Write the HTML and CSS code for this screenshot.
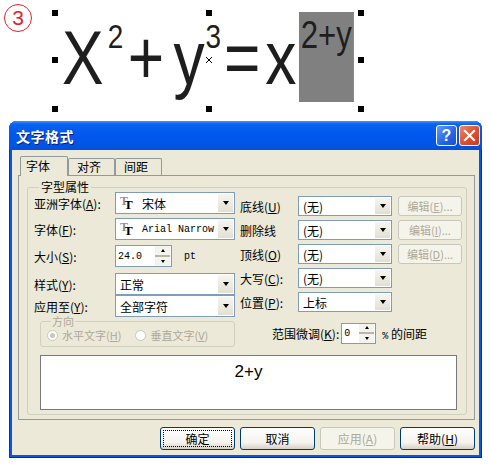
FILE: index.html
```html
<html>
  <head>
    <meta charset="utf-8">
    <link rel="stylesheet" href="styles.css">
  </head>
  <body>
    <div class="canvas">
      <span class="badge">3</span>
      <div class="formula"><span class="ch">X</span><span class="sup s2">2</span><span class="ch plus">+</span><span class="ch yy">y</span><span class="sup s3">3</span><span class="ch eq">=</span><span class="ch xx">x</span><span class="sel">2+y</span></div>
      <span class="handle hl ht"></span>
      <span class="handle hl hm"></span>
      <span class="handle hl hb"></span>
      <span class="handle hc ht"></span>
      <span class="cross hc hm"></span>
      <span class="handle hc hb"></span>
      <span class="handle hr ht"></span>
      <span class="handle hr hm"></span>
      <span class="handle hr hb"></span>
    </div>

    <div class="dialog">
      <div class="titlebar">
        <span class="title">文字格式</span>
        <span class="tbtn help">?</span>
        <span class="tbtn close">
          <svg width="13" height="13" viewBox="0 0 13 13"><path d="M2 2 L11 11 M11 2 L2 11" stroke="#fff" stroke-width="2.2" stroke-linecap="square"/></svg>
        </span>
      </div>

      <div class="body">
        <div class="tabs">
          <span class="tab active">字体</span>
          <span class="tab">对齐</span>
          <span class="tab">间距</span>
        </div>
        <div class="panel">
          <fieldset class="group">
            <legend>字型属性</legend>
            <div class="cols">
              <div class="col-left">
                <div class="row">
                  <span class="lbl">亚洲字体(<u>A</u>):</span>
                  <div class="combo"><span class="val"><span class="tt">T</span>宋体</span><span class="drop"></span></div>
                </div>
                <div class="row r2">
                  <span class="lbl">字体(<u>F</u>):</span>
                  <div class="combo"><span class="val"><span class="tt">T</span><span class="mono">Arial Narrow</span></span><span class="drop"></span></div>
                </div>
                <div class="row r3">
                  <span class="lbl">大小(<u>S</u>):</span>
                  <div class="spin"><span class="mono">24.0</span><span class="arrows"><span class="up"></span><span class="down"></span></span></div>
                  <span class="mono unit">pt</span>
                </div>
                <div class="row r4">
                  <span class="lbl">样式(<u>Y</u>):</span>
                  <div class="combo"><span class="val">正常</span><span class="drop"></span></div>
                </div>
                <div class="row">
                  <span class="lbl">应用至(<u>Y</u>):</span>
                  <div class="combo"><span class="val">全部字符</span><span class="drop"></span></div>
                </div>
                <fieldset class="dir">
                  <legend>方向</legend>
                  <span class="radio"><span class="dot on"></span>水平文字(<u>H</u>)</span>
                  <span class="radio"><span class="dot"></span>垂直文字(<u>V</u>)</span>
                </fieldset>
              </div>

              <div class="col-right">
                <div class="row">
                  <span class="lbl">底线(<u>U</u>)</span>
                  <div class="combo"><span class="val">(无)</span><span class="drop"></span></div>
                  <span class="btn small off">编辑(<u>E</u>)...</span>
                </div>
                <div class="row">
                  <span class="lbl">删除线</span>
                  <div class="combo"><span class="val">(无)</span><span class="drop"></span></div>
                  <span class="btn small off">编辑(<u>I</u>)...</span>
                </div>
                <div class="row">
                  <span class="lbl">顶线(<u>O</u>)</span>
                  <div class="combo"><span class="val">(无)</span><span class="drop"></span></div>
                  <span class="btn small off">编辑(<u>D</u>)...</span>
                </div>
                <div class="row">
                  <span class="lbl">大写(<u>C</u>):</span>
                  <div class="combo"><span class="val">(无)</span><span class="drop"></span></div>
                </div>
                <div class="row">
                  <span class="lbl">位置(<u>P</u>):</span>
                  <div class="combo"><span class="val">上标</span><span class="drop"></span></div>
                </div>
                <div class="row fine">
                  <span>范围微调(<u>K</u>):</span>
                  <div class="spin narrow"><span class="mono">0</span><span class="arrows"><span class="up"></span><span class="down"></span></span></div>
                  <span><span class="mono">%</span> 的间距</span>
                </div>
              </div>
            </div>
            <div class="preview">2+y</div>
          </fieldset>
        </div>

        <div class="buttons">
          <span class="btn focus"><span class="ring">确定</span></span>
          <span class="btn">取消</span>
          <span class="btn off">应用(<u>A</u>)</span>
          <span class="btn">帮助(<u>H</u>)</span>
        </div>
      </div>
    </div>
  </body>
</html>
```

FILE: styles.css
```css
html, body {padding: 0; margin: 0}
body {
  width: 491px;
  height: 465px;
  background: #fff;
  font-family: "Noto Sans CJK SC", sans-serif;
  font-size: 12px;
  color: #000;
  overflow: hidden;
}
u { text-decoration: underline; text-underline-offset: 1px; }

/* formula area */
.canvas {
  position: relative;
  height: 121px;
  display: flex;
  align-items: flex-start;
}
.badge {
  margin: 4px 0 0 4px;
  width: 26px;
  height: 26px;
  border: 1.5px solid #e8202a;
  border-radius: 50%;
  color: #e8202a;
  font: 21px/26px "Liberation Sans", sans-serif;
  text-align: center;
}
/* no narrow face installed: squeeze the regular one */
.formula {
  margin: 12px 0 0 30px;
  font-family: "Liberation Sans", sans-serif;
  font-size: 76px;
  line-height: 76px;
  color: #1e1e1e;
  white-space: nowrap;
  transform: scaleX(0.82);
  transform-origin: left top;
}
.formula .sup {
  font-size: 34px;
  line-height: 34px;
  vertical-align: 36px;
}
.formula .s2 { margin-left: 5px; }
.formula .plus { margin-left: 5.5px; }
.formula .yy { margin-left: 11.5px; }
.formula .s3 { margin-left: 1px; }
.formula .eq { margin-left: 3.5px; }
.formula .xx { margin-left: 6px; }
.formula .sel {
  display: inline-block;
  vertical-align: 36px;
  margin-left: 3px;
  width: 67px;
  height: 90px;
  box-sizing: border-box;
  padding-top: 4px;
  background: #808080;
  font-size: 38px;
  line-height: 38px;
  text-align: center;
}
.handle {
  position: absolute;
  width: 6px;
  height: 6px;
  background: #000;
}
.cross {
  position: absolute;
  width: 6px;
  height: 6px;
  background:
    linear-gradient(45deg, transparent 42%, #000 42%, #000 58%, transparent 58%),
    linear-gradient(-45deg, transparent 42%, #000 42%, #000 58%, transparent 58%);
}
.hl { left: 52px; }
.hc { left: 206px; }
.hr { left: 358px; }
.ht { top: 10px; }
.hm { top: 57px; }
.hb { top: 106px; }

/* dialog */
.dialog {
  margin-left: 9px;
  width: 473px;
  box-sizing: border-box;
  padding: 0 3px 3px 3px;
  background: #0b55e0;
  border-radius: 8px 8px 0 0;
  box-shadow: inset 1px 0 #0831b8, inset -1px 0 #002fa8, inset 0 -1px #0029a0;
}
.titlebar {
  height: 29px;
  margin: 0 -3px;
  padding: 0 2px 0 7px;
  display: flex;
  align-items: center;
  border-radius: 8px 8px 0 0;
  background: linear-gradient(to bottom, #3d95ff 0, #0a62f0 3px, #0058ee 12px, #0055e5 24px, #0250d8 100%);
}
.title {
  flex: 1;
  color: #fff;
  font-weight: bold;
  font-size: 14px;
  letter-spacing: 0.5px;
  text-shadow: 1px 1px #0a1e80;
}
.tbtn {
  width: 21px;
  height: 21px;
  box-sizing: border-box;
  border: 1px solid #fff;
  border-radius: 3px;
  display: flex;
  align-items: center;
  justify-content: center;
  margin-left: 2px;
}
.help {
  background: linear-gradient(135deg, #5c9cff, #2663e6 60%, #1a50cc);
  color: #fff;
  font: bold 16px/1 "Liberation Sans", sans-serif;
}
.close {
  background: linear-gradient(135deg, #f08a6c, #e0512e 50%, #c73a18);
}

.body {
  background: #ece9d8;
  height: 305px;
  box-sizing: border-box;
  padding: 7px 4px 5px 6px;
}
.tabs {
  display: flex;
  align-items: flex-end;
  height: 18px;
  padding-left: 2px;
}
.tab {
  height: 17px;
  box-sizing: border-box;
  border: 1px solid #919b9c;
  border-bottom: none;
  border-radius: 2px 2px 0 0;
  padding: 0 0 0 8px;
  width: 47px;
  line-height: 16px;
  background: #ece9d8;
}
.tab.active {
  width: 48px;
  height: 20px;
  position: relative;
  top: 1px;
  z-index: 1;
  padding-left: 5px;
  line-height: 18px;
}
.panel {
  height: 245px;
  box-sizing: border-box;
  border: 1px solid #919b9c;
  padding: 5px 7px 5px 8px;
}
.group {
  margin: 0;
  height: 234px;
  box-sizing: border-box;
  border: 1px solid #d0d0bf;
  border-radius: 3px;
  padding: 0 4px 5px 6px;
}
.group > legend {
  margin-left: 5px;
  padding: 0 2px;
  line-height: 12px;
}
.cols {
  display: flex;
  gap: 5px;
  margin-top: -2px;
  height: 157px;
}
.col-left {
  width: 201px;
  display: flex;
  flex-direction: column;
  padding-top: 1px;
}
.col-right {
  width: 222px;
  display: flex;
  flex-direction: column;
  gap: 4px;
  padding-top: 5px;
}
.row {
  display: flex;
  align-items: center;
  height: 22px;
  flex: none;
}
.row.r2 { margin-top: 4px; }
.row.r3 { margin-top: 5px; }
.row.r4 { margin-top: 6px; }
.col-right .row { height: 20px; }
.lbl { width: 81px; white-space: nowrap; }
.col-right .lbl { width: 58px; }

.combo {
  width: 120px;
  height: 100%;
  box-sizing: border-box;
  border: 1px solid #7f9db9;
  background: #fff;
  display: flex;
}
.col-right .combo { width: 94px; }
.val {
  flex: 1;
  display: flex;
  align-items: center;
  padding-left: 4px;
  white-space: nowrap;
  overflow: hidden;
}
.drop {
  width: 15px;
  margin: 1px;
  background: linear-gradient(#f6f5f0, #e3e0d2);
  display: flex;
  align-items: center;
  justify-content: center;
}
.drop::after {
  content: "";
  border-left: 3.5px solid transparent;
  border-right: 3.5px solid transparent;
  border-top: 4px solid #000;
}
.tt {
  position: relative;
  width: 13px;
  height: 14px;
  margin-right: 5px;
  padding-left: 4px;
  font-family: "Liberation Serif", serif;
  font-weight: bold;
  font-size: 13px;
  line-height: 17px;
}
.tt::before {
  content: "T";
  position: absolute;
  left: 0;
  top: -3px;
  color: #909090;
  font-size: 12px;
}
.mono {
  font-family: "Liberation Mono", monospace;
  font-size: 10px;
}
.unit { margin-left: 12px; }

.spin {
  width: 57px;
  height: 100%;
  box-sizing: border-box;
  border: 1px solid #7f9db9;
  background: #fff;
  display: flex;
  align-items: center;
  justify-content: space-between;
  padding-left: 2px;
}
.spin.narrow { width: 35px; height: 21px; }
.arrows {
  width: 15px;
  height: 100%;
  display: flex;
  flex-direction: column;
  margin-right: 1px;
}
.arrows span {
  flex: 1;
  display: flex;
  align-items: center;
  justify-content: center;
  background: #f4f3ee;
}
.arrows .up { border-bottom: 2px solid #b9b6a8; }
.arrows .up::after {
  content: "";
  border-left: 2.5px solid transparent;
  border-right: 2.5px solid transparent;
  border-bottom: 3px solid #000;
}
.arrows .down::after {
  content: "";
  border-left: 2.5px solid transparent;
  border-right: 2.5px solid transparent;
  border-top: 3px solid #000;
}

.btn {
  width: 75px;
  height: 23px;
  box-sizing: border-box;
  border: 1px solid #003c74;
  border-radius: 3px;
  background: linear-gradient(#fefefd, #f4f3ee 70%, #d6d0c5);
  display: flex;
  align-items: center;
  justify-content: center;
  white-space: nowrap;
}
.btn.off {
  border-color: #c9c7ba;
  background: #f5f4ea;
  color: #aca899;
}
.btn.small {
  width: 64px;
  height: 20px;
  margin-left: 6px;
  font-size: 11px;
}
.btn.focus .ring {
  width: 67px;
  height: 15px;
  border: 1px dotted #000;
  text-align: center;
  line-height: 15px;
}

.fine {
  padding-left: 32px;
  margin-top: 7px;
  height: 22px;
}
.fine .spin { margin: 0 6px 0 2px; }

.dir {
  margin: 0 0 0 6px;
  width: 195px;
  height: 30px;
  flex: none;
  box-sizing: border-box;
  border: 1px solid #d0d0bf;
  border-radius: 3px;
  padding: 4px 6px 0;
  color: #aca899;
  font-size: 11px;
  display: flex;
  align-items: center;
  gap: 14px;
}
.dir legend {
  padding: 0 1px;
  margin-left: 4px;
  line-height: 8px;
}
.radio {
  display: flex;
  align-items: center;
  white-space: nowrap;
  line-height: 12px;
}
.dot {
  width: 11px;
  height: 11px;
  box-sizing: border-box;
  border: 1px solid #cac8bb;
  border-radius: 50%;
  background: #fff;
  margin-right: 4px;
  display: flex;
  align-items: center;
  justify-content: center;
}
.dot.on::after {
  content: "";
  width: 5px;
  height: 5px;
  border-radius: 50%;
  background: #cac8bb;
}

.preview {
  margin: 7px 0 0 6px;
  width: 417px;
  height: 55px;
  box-sizing: border-box;
  border: 1px solid #7a7a7a;
  background: #fff;
  text-align: center;
  font: 17px/24px "Liberation Sans", sans-serif;
  padding-top: 4px;
}

.buttons {
  margin-top: 7px;
  display: flex;
  justify-content: flex-end;
  gap: 5px;
}
```
